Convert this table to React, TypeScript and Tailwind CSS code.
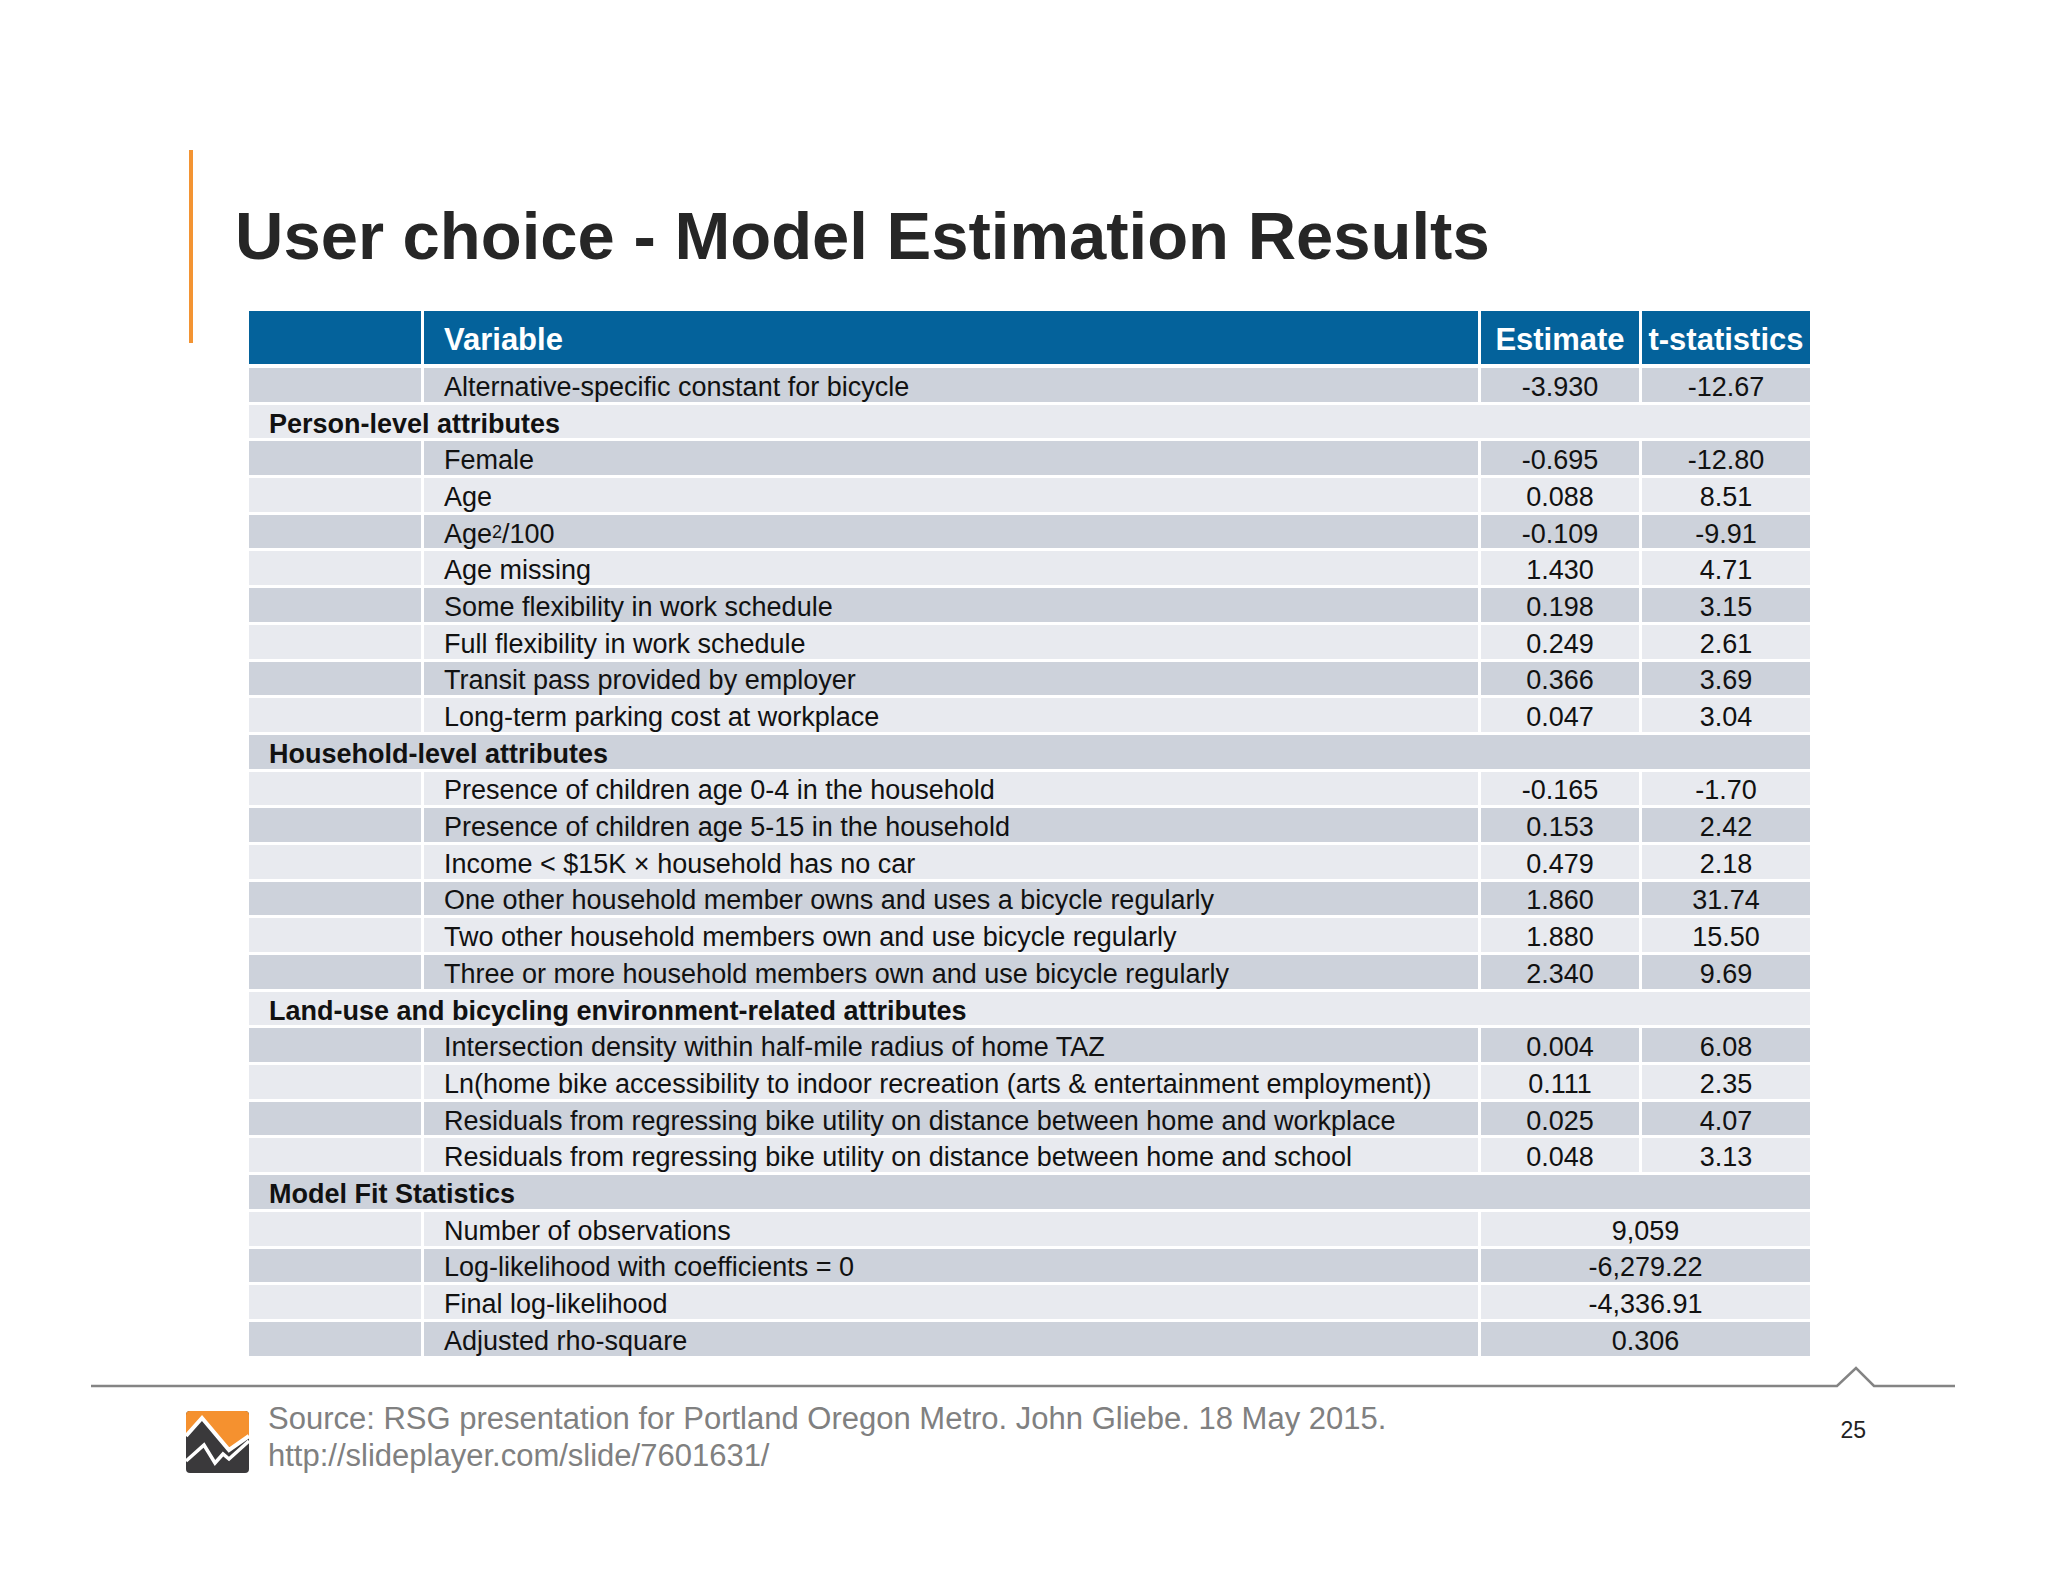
import React from 'react';

type Row =
  | { kind: 'var'; label: React.ReactNode; est: string; t: string }
  | { kind: 'section'; label: string }
  | { kind: 'fit'; label: string; value: string };

const rows: Row[] = [
  { kind: 'var', label: 'Alternative-specific constant for bicycle', est: '-3.930', t: '-12.67' },
  { kind: 'section', label: 'Person-level attributes' },
  { kind: 'var', label: 'Female', est: '-0.695', t: '-12.80' },
  { kind: 'var', label: 'Age', est: '0.088', t: '8.51' },
  {
    kind: 'var',
    label: (
      <>
        Age<sup className="text-[18px] relative -top-[2px]">2</sup>/100
      </>
    ),
    est: '-0.109',
    t: '-9.91',
  },
  { kind: 'var', label: 'Age missing', est: '1.430', t: '4.71' },
  { kind: 'var', label: 'Some flexibility in work schedule', est: '0.198', t: '3.15' },
  { kind: 'var', label: 'Full flexibility in work schedule', est: '0.249', t: '2.61' },
  { kind: 'var', label: 'Transit pass provided by employer', est: '0.366', t: '3.69' },
  { kind: 'var', label: 'Long-term parking cost at workplace', est: '0.047', t: '3.04' },
  { kind: 'section', label: 'Household-level attributes' },
  { kind: 'var', label: 'Presence of children age 0-4 in the household', est: '-0.165', t: '-1.70' },
  { kind: 'var', label: 'Presence of children age 5-15 in the household', est: '0.153', t: '2.42' },
  { kind: 'var', label: 'Income < $15K × household has no car', est: '0.479', t: '2.18' },
  { kind: 'var', label: 'One other household member owns and uses a bicycle regularly', est: '1.860', t: '31.74' },
  { kind: 'var', label: 'Two other household members own and use bicycle regularly', est: '1.880', t: '15.50' },
  { kind: 'var', label: 'Three or more household members own and use bicycle regularly', est: '2.340', t: '9.69' },
  { kind: 'section', label: 'Land-use and bicycling environment-related attributes' },
  { kind: 'var', label: 'Intersection density within half-mile radius of home TAZ', est: '0.004', t: '6.08' },
  {
    kind: 'var',
    label: 'Ln(home bike accessibility to indoor recreation (arts & entertainment employment))',
    est: '0.111',
    t: '2.35',
  },
  {
    kind: 'var',
    label: 'Residuals from regressing bike utility on distance between home and workplace',
    est: '0.025',
    t: '4.07',
  },
  {
    kind: 'var',
    label: 'Residuals from regressing bike utility on distance between home and school',
    est: '0.048',
    t: '3.13',
  },
  { kind: 'section', label: 'Model Fit Statistics' },
  { kind: 'fit', label: 'Number of observations', value: '9,059' },
  { kind: 'fit', label: 'Log-likelihood with coefficients = 0', value: '-6,279.22' },
  { kind: 'fit', label: 'Final log-likelihood', value: '-4,336.91' },
  { kind: 'fit', label: 'Adjusted rho-square', value: '0.306' },
];

function Logo() {
  return (
    <svg width="63" height="62" viewBox="0 0 63 62">
      <rect width="63" height="62" rx="4" fill="#3a393b" />
      <path d="M4 0 H59 Q63 0 63 4 V25 L43 39 L16 7 L0 25 V4 Q0 0 4 0 Z" fill="#f5912f" />
      <polyline points="0,25 16,7 43,39 63,25" fill="none" stroke="#fff" strokeWidth="4" strokeLinejoin="miter" />
      <polyline
        points="0,50 18,34 29,52 37,43 43,48 63,30"
        fill="none"
        stroke="#fff"
        strokeWidth="3.5"
        strokeLinejoin="miter"
      />
    </svg>
  );
}

function DataTable() {
  return (
    <div className="w-[1561px] text-[27px] text-[#111]">
      <div className="grid grid-cols-[172px_1054px_158px_168px] gap-x-[3px] h-[50px] text-white font-bold text-[31px]">
        <div className="bg-[#04629b]" />
        <div className="bg-[#04629b] flex items-center pl-[20px] pt-[6px]">Variable</div>
        <div className="bg-[#04629b] flex items-center justify-center pt-[6px]">Estimate</div>
        <div className="bg-[#04629b] flex items-center justify-center pt-[6px]">t-statistics</div>
      </div>
      <div className="mt-[7px] grid grid-cols-[172px_1054px_158px_168px] gap-x-[3px] gap-y-[3px] auto-rows-[33.7px]">
        {rows.map((row, i) => {
          const bg = i % 2 === 0 ? 'bg-[#cdd2db]' : 'bg-[#e8eaef]';
          if (row.kind === 'section') {
            return (
              <div key={i} className={`${bg} col-span-4 flex items-center pl-[20px] pt-[5px] font-bold leading-none`}>
                {row.label}
              </div>
            );
          }
          if (row.kind === 'fit') {
            return (
              <React.Fragment key={i}>
                <div className={bg} />
                <div className={`${bg} flex items-center pl-[20px] pt-[5px] leading-none whitespace-nowrap`}>
                  {row.label}
                </div>
                <div className={`${bg} col-span-2 flex items-center justify-center pt-[5px] leading-none`}>
                  {row.value}
                </div>
              </React.Fragment>
            );
          }
          return (
            <React.Fragment key={i}>
              <div className={bg} />
              <div className={`${bg} flex items-center pl-[20px] pt-[5px] leading-none whitespace-nowrap`}>
                {row.label}
              </div>
              <div className={`${bg} flex items-center justify-center pt-[5px] leading-none`}>{row.est}</div>
              <div className={`${bg} flex items-center justify-center pt-[5px] leading-none`}>{row.t}</div>
            </React.Fragment>
          );
        })}
      </div>
    </div>
  );
}

export default function App() {
  return (
    <div className="w-[2048px] h-[1582px] bg-white overflow-hidden font-['Liberation_Sans',Arial,sans-serif]">
      <div className="flex pt-[150px]">
        <div className="ml-[189px] w-[4px] h-[193px] bg-[#f39433] shrink-0" />
        <div className="ml-[42px] flex flex-col">
          <h1 className="mt-[52px] text-[67px] leading-none font-bold text-[#262626] whitespace-nowrap">
            User choice - Model Estimation Results
          </h1>
          <div className="mt-[42px] ml-[14px]">
            <DataTable />
          </div>
        </div>
      </div>

      <svg className="ml-[91px] mt-[8px] block" width="1864" height="26" viewBox="0 0 1864 26">
        <polyline
          points="0,22 1746,22 1765,4 1783,22 1864,22"
          fill="none"
          stroke="#848484"
          strokeWidth="2.5"
        />
      </svg>

      <div className="flex mt-[10px]">
        <div className="ml-[186px] mt-[11px] shrink-0">
          <Logo />
        </div>
        <div className="ml-[19px] text-[31px] leading-[37px] text-[#808080]">
          <div>Source: RSG presentation for Portland Oregon Metro. John Gliebe. 18 May 2015.</div>
          <div>http://slideplayer.com/slide/7601631/</div>
        </div>
        <div className="ml-auto mr-[182px] mt-[19px] text-[23px] leading-none text-[#222]">25</div>
      </div>
    </div>
  );
}
